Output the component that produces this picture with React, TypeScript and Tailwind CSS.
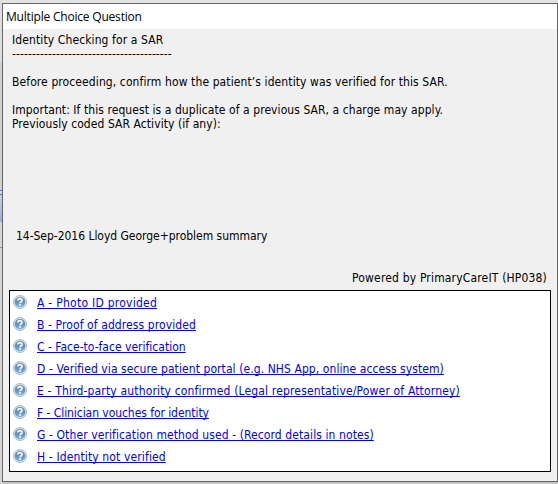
const options = [
  { label: 'A - Photo ID provided', tracking: 'tracking-[0.26px]' },
  { label: 'B - Proof of address provided', tracking: 'tracking-[0.1px]' },
  { label: 'C - Face-to-face verification', tracking: 'tracking-[0.01px]' },
  { label: 'D - Verified via secure patient portal (e.g. NHS App, online access system)', tracking: 'tracking-[0.08px]' },
  { label: 'E - Third-party authority confirmed (Legal representative/Power of Attorney)', tracking: 'tracking-[0.16px]' },
  { label: 'F - Clinician vouches for identity', tracking: 'tracking-[-0.06px]' },
  { label: 'G - Other verification method used - (Record details in notes)', tracking: 'tracking-[0.1px]' },
  { label: 'H - Identity not verified', tracking: 'tracking-[0.13px]' },
];

function HelpIcon() {
  return (
    <svg width="14" height="14" viewBox="0 0 14 14" className="mb-[2px] shrink-0">
      <defs>
        <linearGradient id="help" x1="0" y1="0" x2="0" y2="1">
          <stop offset="0" stopColor="#6a90bd" />
          <stop offset="0.5" stopColor="#5f90c4" />
          <stop offset="1" stopColor="#85b8e2" />
        </linearGradient>
      </defs>
      <circle cx="7" cy="7" r="6.5" fill="#dce7f2" stroke="#9fb4cc" strokeWidth="0.9" />
      <circle cx="7" cy="7" r="5.3" fill="url(#help)" />
      <path d="M4.9 5.6C4.9 3 9.1 3 9.1 5.4C9.1 6.9 7.1 6.6 7.1 8.3" fill="none" stroke="#fff" strokeWidth="1.6" />
      <rect x="6.2" y="9.1" width="1.8" height="1.6" fill="#fff" />
    </svg>
  );
}

export default function App() {
  return (
    <div className="flex h-[484px] w-[558px] overflow-hidden bg-[#dcdcdc]">
      {/* Edge of the window behind the dialog */}
      <div className="flex w-[2px] shrink-0 flex-col">
        <div className="h-[62px] bg-[#dedede]" />
        <div className="h-[128px] bg-[#d0d0d0]" />
        <div className="h-[5px] border-y border-[#5d82b5] bg-[#c5d5ea]" />
        <div className="h-[27px] bg-gradient-to-b from-[#c3d0e2] to-[#93b0dc]" />
        <div className="h-[26px] border-b border-[#999] bg-[#d6d6d6]" />
        <div className="flex-1 bg-[#d4d4d4]" />
      </div>

      <div className="flex w-[556px] flex-col">
        <div className="h-[3px] shrink-0 bg-[#e2e2e2]" />
        <div className="flex h-[479px] flex-col border border-[#666] bg-[#f0f0f0] font-['DejaVu_Sans_Condensed','DejaVu_Sans',sans-serif] text-[12px] leading-[14px] text-black">
          <div className="flex h-[25px] shrink-0 items-center bg-white pl-[3px] font-['Open_Sans',sans-serif]">
            <span className="tracking-[-0.2px]">Multiple Choice Question</span>
          </div>

          <div className="flex h-[261px] shrink-0 flex-col items-start whitespace-pre pt-[4px] pl-[9px]">
            <span className="tracking-[0.11px]">Identity Checking for a SAR</span>
            <span className="tracking-[0.1px]">{'-'.repeat(40)}</span>
            <span className="mt-[14px] tracking-[0.1px]">Before proceeding, confirm how the patient’s identity was verified for this SAR.</span>
            <span className="mt-[14px] tracking-[0.07px]">Important: If this request is a duplicate of a previous SAR, a charge may apply.</span>
            <span className="tracking-[0.07px]">Previously coded SAR Activity (if any):</span>
            <span className="mt-[98px] ml-[4px] tracking-[-0.03px]">14-Sep-2016 Lloyd George+problem summary</span>
            <span className="mt-[28px] mr-[10px] self-end tracking-[0.17px]">Powered by PrimaryCareIT (HP038)</span>
          </div>

          <ul className="ml-[6px] h-[182px] w-[542px] border border-black bg-white pt-px pl-[3px]">
            {options.map((option) => (
              <li key={option.label} className="flex h-[22px] items-center gap-[10px]">
                <HelpIcon />
                <a href="#" className={`whitespace-nowrap text-[#0000ff] underline decoration-1 underline-offset-1 [text-decoration-skip-ink:none] ${option.tracking}`}>
                  {option.label}
                </a>
              </li>
            ))}
          </ul>
        </div>
        <div className="h-[2px] bg-[#c4c4c4]" />
      </div>
    </div>
  );
}
